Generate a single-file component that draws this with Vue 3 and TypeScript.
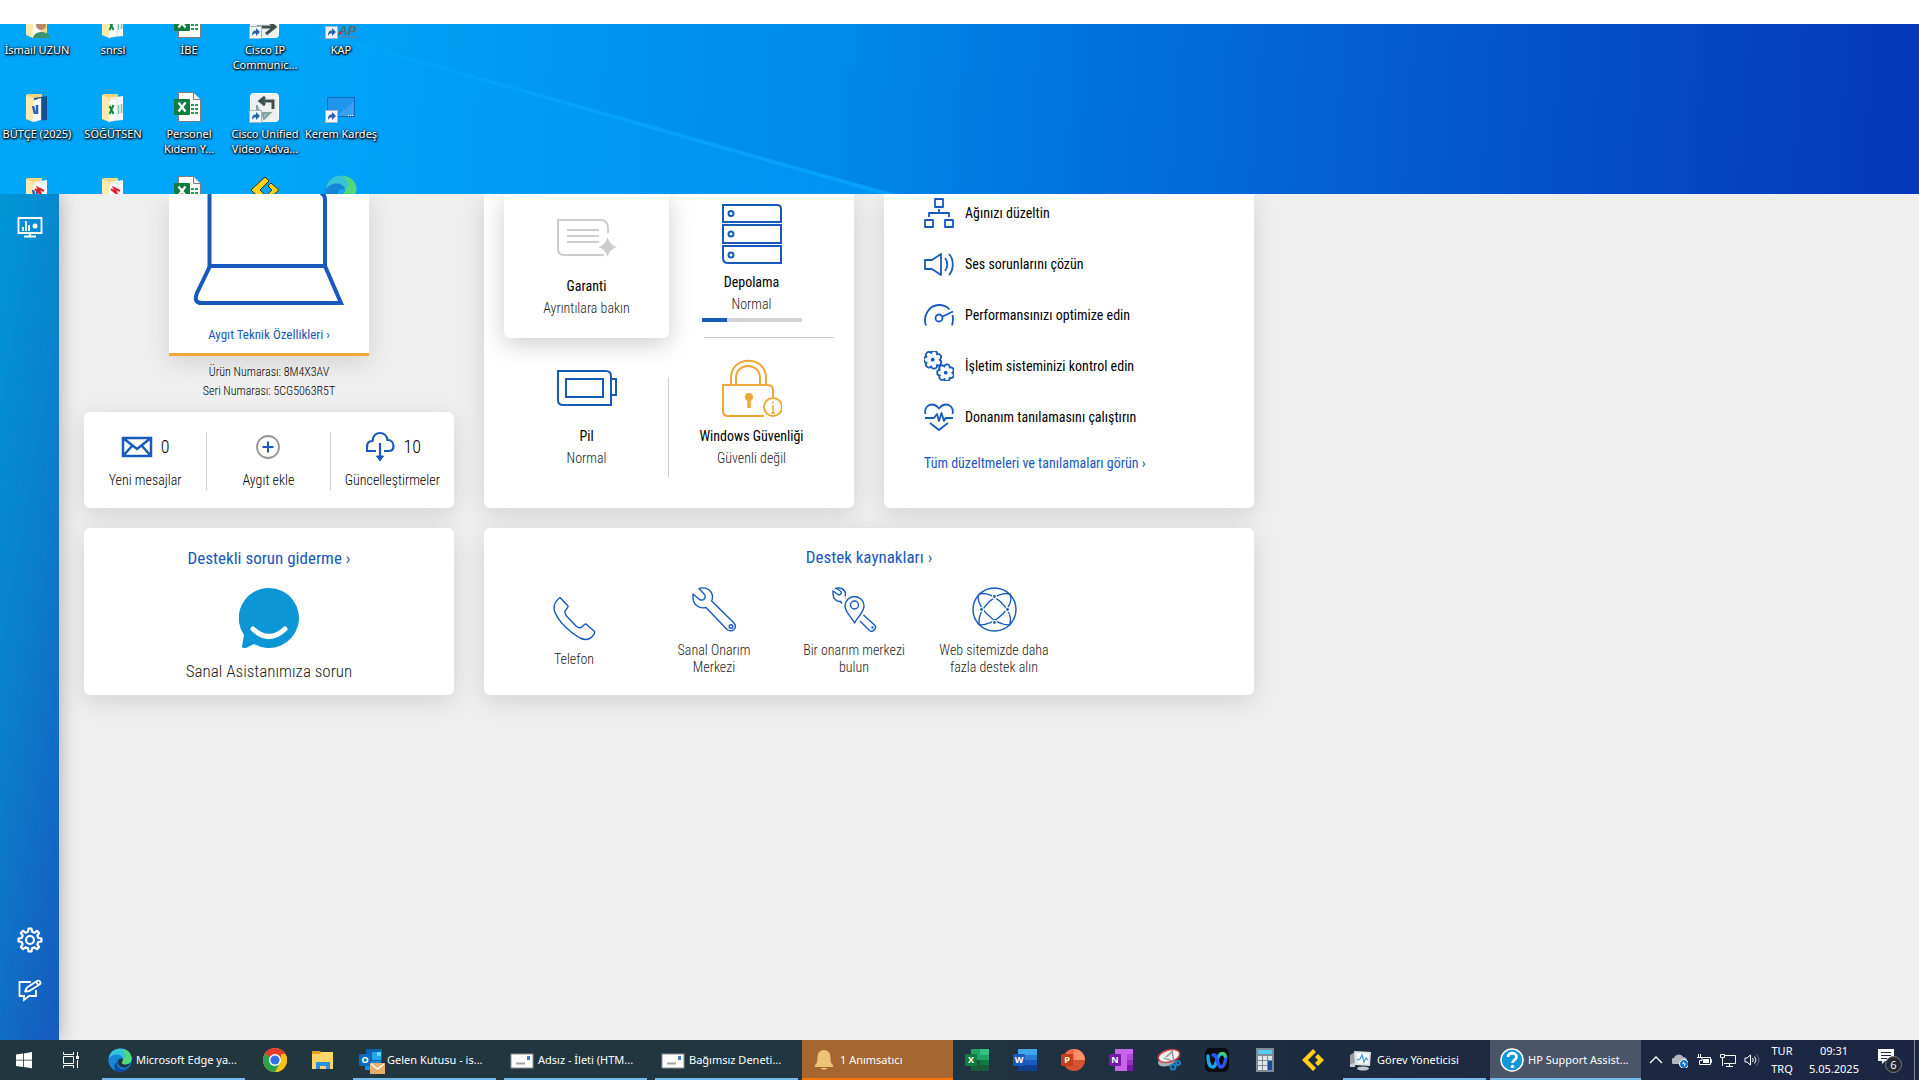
<script setup lang="ts">
interface DesktopItem {
  lines: string[]
  icon: string
}

interface ResourceItem {
  label: string
  icon: string
}

interface TaskItem {
  kind: 'pinned' | 'running' | 'alert' | 'active'
  name: string
  icon: string
}

function gearPath(cx: number, cy: number, outer: number, inner: number, teeth: number): string {
  const points: string[] = []
  const step = (Math.PI * 2) / teeth
  for (let i = 0; i < teeth; i++) {
    const a = i * step - Math.PI / 2
    const corners: [number, number][] = [
      [a - step * 0.3, inner],
      [a - step * 0.17, outer],
      [a + step * 0.17, outer],
      [a + step * 0.3, inner],
    ]
    for (const [angle, r] of corners) {
      points.push(`${(cx + Math.cos(angle) * r).toFixed(2)} ${(cy + Math.sin(angle) * r).toFixed(2)}`)
    }
  }
  return `M${points.join('L')}Z`
}

function flowerPath(cx: number, cy: number, r: number, petals: number): string {
  const step = (Math.PI * 2) / petals
  const at = (i: number): string =>
    `${(cx + Math.cos(i * step) * r).toFixed(2)} ${(cy + Math.sin(i * step) * r).toFixed(2)}`
  let d = `M${at(0)}`
  for (let i = 1; i <= petals; i++) d += `A${(r * 0.42).toFixed(2)} ${(r * 0.42).toFixed(2)} 0 0 1 ${at(i)}`
  return `${d}Z`
}

const shortcut =
  '<rect x=".5" y="19.5" width="12" height="12" fill="#f4f6f8" stroke="#a9b4bd"/><path d="M3 29c0-4 1-5.500 4-5.500V21l4 4-4 4v-2.500c-2 0-3 .5-4 2.500z" fill="#2a62ad"/>'

const folder = (paper: string, mark: string): string =>
  `<path d="M5 4l2-1h14v26H11z" fill="#f3d481"/><path d="M13 7l13-2v24l-11 1z" fill="${paper}"/><path d="M11 10l9-3v22l-8 2z" fill="#fbfcfd" stroke="#c9ced3" stroke-width=".5"/><path d="M5 4l7 3v24l-7-3z" fill="#ffe9ae"/>${mark}`

const sheetMark = '<path d="M12.500 15l4 8M16.500 14l-4 9" stroke="#17834b" stroke-width="2" fill="none"/><path d="M21.500 14v9M24.500 13v9" stroke="#7cc59b" stroke-width="1.500" fill="none"/>'
const wordMark = '<path d="M12 15l2 8M16 14v9" stroke="#2b64c0" stroke-width="2.500" fill="none"/>'
const redMark = '<path d="M14 14l6 5-3-6 6 3" stroke="#e0202c" stroke-width="2" fill="none"/>'

const excelFile =
  '<path d="M5.500 1.500h15l7 7v22h-22z" fill="#fff" stroke="#7d7d7d"/><path d="M20.500 1.500v7h7" fill="#eee" stroke="#7d7d7d"/><path d="M18 13h3v2h-3zM22 13h3v2h-3zM18 17h3v2h-3zM22 17h3v2h-3zM18 21h3v2h-3zM22 21h3v2h-3z" fill="#1f9d5b"/><rect x="1" y="8" width="16" height="16" rx="1" fill="#107c41"/><path d="M5.500 11.500l7 9M12.500 11.500l-7 9" stroke="#fff" stroke-width="2.300"/>'

const ciscoTile = (mark: string): string =>
  `<rect x="1.500" y="2.500" width="28" height="28" rx="3" fill="#eef0f0" stroke="#fff"/>${mark}${shortcut}`

const edge =
  '<circle cx="16" cy="16" r="15.500" fill="#1686d9"/><path d="M1 14C2 5 9 .5 16 .5c9 0 15.500 6.500 15.500 13.500 0 5-4 8-8 8-3 0-5-1-5-2.500s1.500-2 1.500-4.500c0-4-4-6.500-8.500-6.500C6.500 8.500 3 11 1 14z" fill="#36c5d8"/><path d="M19 1c8 1 12.500 7 12.500 13 0 5-4 8-8 8-3 0-5-1-5-2.500s1.500-2 1.500-4.500c3-1 4-9-1-14z" fill="#52d87c"/><path d="M12 18c-1 6 4 11.500 10 10 3-.5 5-2 7-4-3 6-8 8-13 8C8 31 5 24 12 18z" fill="#0b4ea2"/><path d="M13 17c1-3 5-4 7-2 0 2-1.500 3-1.500 4.500S20 22 23 22c2.500 0 5-1 7-2.500C28 25 24 26.500 20 26c-5-.5-8-5-7-9z" fill="#22363f"/>'

const desktopEdge = edge.replace('#22363f', '#18a5ec')

const arrows =
  '<path d="M16 2l4 4-9 9 9 9-4 4L2 15z" fill="#ffd21e" stroke="#3c3000" stroke-width="1"/><path d="M22 8l8 7-8 7-3-3 4-4-4-4z" fill="#ffd21e" stroke="#3c3000" stroke-width="1"/>'

const desktopItems: DesktopItem[] = [
  { lines: ['İsmail UZUN'], icon: folder('#f2d98f', '<path d="M12 31c1-8 16-8 17 0z" fill="#3f9170"/><circle cx="20" cy="18" r="5" fill="#b98a62"/>') },
  { lines: ['snrsl'], icon: folder('#f7f9f8', sheetMark) },
  { lines: ['İBE'], icon: excelFile },
  { lines: ['Cisco IP', 'Communic...'], icon: ciscoTile('<path d="M8 20h17M18 13l8 7-9 7" stroke="#3c5050" stroke-width="3" fill="none"/>') },
  { lines: ['KAP'], icon: `<text x="4" y="28" font-family="Liberation Sans" font-size="13" font-weight="700" font-style="italic" fill="#5e666e">KAP</text><path d="M14 30h18" stroke="#8b7683"/><circle cx="15" cy="26" r="1.500" fill="#d81f2a"/>${shortcut}` },
  { lines: ['BÜTÇE (2025)'], icon: folder('#17508c', wordMark) },
  { lines: ['SÖĞÜTSEN'], icon: folder('#f7f9f8', sheetMark) },
  { lines: ['Personel', 'Kıdem Y...'], icon: excelFile },
  { lines: ['Cisco Unified', 'Video Adva...'], icon: ciscoTile('<path d="M24 18V10H12M16 6l-5 4 5 4" stroke="#3c5050" stroke-width="3" fill="none"/><path d="M8 14v8h5M13 22h8l-6 6z" stroke="#7fa3a0" stroke-width="2" fill="#7fa3a0" fill-opacity=".7"/>') },
  { lines: ['Kerem Kardeş'], icon: `<rect x="2.500" y="6.500" width="27" height="19" fill="#1e96ee" stroke="#0d6ab8"/><path d="M12 25L29 10v15z" fill="#45a9f0" opacity=".6"/><path d="M23 24.500h5" stroke="#fff" stroke-dasharray="1 1"/>${shortcut}` },
  { lines: [], icon: folder('#f7f9f8', wordMark + redMark) },
  { lines: [], icon: folder('#f7f9f8', redMark) },
  { lines: [], icon: excelFile },
  { lines: [], icon: arrows },
  { lines: [], icon: desktopEdge },
]

const fixes: ResourceItem[] = [
  { label: 'Ağınızı düzeltin', icon: '<path d="M11 1h8v8h-8zM1 22h8v7H1zM21 22h8v7h-8zM15 11v4M5 19v-4h20v4"/>' },
  { label: 'Ses sorunlarını çözün', icon: '<path d="M1 11v9h7l9 6V5l-9 6zM21 9c3 3.500 3 9.500 0 13M25 5c5 5.500 5 15.500 0 21"/>' },
  { label: 'Performansınızı optimize edin', icon: '<circle cx="15" cy="18" r="3.500"/><path d="M2 25.500C-1.500 16 5 5 15 5c4 0 8 1.500 10.500 4.500M18.500 16.500L29 11.500M28.500 15c.8 3.500.6 7-.5 10.500"/>' },
  { label: 'İşletim sisteminizi kontrol edin', icon: `<path d="${flowerPath(8.7, 8.7, 6.8, 7)}"/><path d="${flowerPath(21.7, 21.7, 6.4, 7)}"/><circle cx="8.700" cy="8.700" r="1"/><circle cx="21.700" cy="21.700" r="1"/>` },
  { label: 'Donanım tanılamasını çalıştırın', icon: '<path d="M1.500 12C0 6 4 2.500 8 2.500c3 0 5 1.500 7 4 2-2.500 4-4 7-4 4 0 8 3.500 6.500 9.500M1 16h9l3-4 2 7 2.500-8L20 19l1.500-3H29M6 21l9 7 9-7"/>' },
]

const resources: ResourceItem[] = [
  { label: 'Telefon', icon: '<path d="M8 1.500L16 10c1 1-2 3-3 5-.5 2 0 3 1.500 5L24 30c2 1.800 3.500 2 5 1.500 2-1 3.500-4 5-3.500l8 7c1.500 1.500.5 3-1 4.500-3 4-8 5-13 2.500C17 36 6 25 2.500 15 1 9 4 4.500 8 1.500z"/>' },
  { label: 'Sanal Onarım Merkezi', icon: '<path d="M7 1.500c6-2 13 1 13.500 8 0 1.500-.3 3-.8 4.500L42 36c4 5-2 10-7 6.500L14 20.500C7 22 1 18 1 10V7l6.500 5.500c4 2 7-1.500 5-5z"/><circle cx="39" cy="39.500" r="1.800"/>' },
  { label: 'Bir onarım merkezi bulun', icon: '<path d="M3 1.500c5-1.500 10 .5 10.500 5l-.3 3M10 16.500l-1.500-2C5 15 1 12 1 7V4l5 3.500c2 1 4-1 3-3L4.500 1.500M14 11.500l-.5-.5"/><path d="M22.500 36c-3-6-9.500-11-9.500-17a9.500 9.500 0 0 1 19 0c0 6-6.500 11-9.500 17z"/><circle cx="22.500" cy="18" r="4"/><path d="M31.500 28l11 10c3 3-1.500 8-5 5.500L28 34"/><circle cx="40.500" cy="40.500" r=".5"/>' },
  { label: 'Web sitemizde daha fazla destek alın', icon: '<circle cx="22.500" cy="22.500" r="21.500"/><path d="M7 7C2 16 20 38 38 38M7 7c13-4 35 15 31 31M38 7C25 3 5 22 7 38M38 7c5 12-14 31-31 31"/><g fill="#1759bd" stroke="#fff" stroke-width="1.200"><circle cx="22.500" cy="9.500" r="2"/><circle cx="22.500" cy="35.500" r="2"/><circle cx="9.500" cy="22.500" r="2"/><circle cx="35.500" cy="22.500" r="2"/></g>' },
]

const officeText = (letter: string, x: number, y: number): string =>
  `<text x="${x}" y="${y}" text-anchor="middle" font-family="Open Sans" font-size="9" font-weight="700" fill="#fff">${letter}</text>`

const mailIcon =
  '<rect x="1" y="6" width="22" height="14" fill="#fdfdfd" stroke="#8e8e8e"/><rect x="17" y="8" width="3" height="4" fill="#3f7fc4"/><path d="M6 15.500h9" stroke="#a3a3a3" stroke-width="2"/>'

const tasks: TaskItem[] = [
  { kind: 'running', name: 'Microsoft Edge ya...', icon: `<g transform="scale(.75)">${edge}</g>` },
  { kind: 'pinned', name: 'Google Chrome', icon: '<circle cx="12" cy="12" r="12" fill="#fbc116"/><path d="M12 12L1.600 6A12 12 0 0 1 22.400 6z" fill="#e33b2e"/><path d="M12 12L1.600 6A12 12 0 0 0 12 24l5-9z" fill="#2ca24c"/><path d="M12 12h11V6H12z" fill="#e33b2e"/><path d="M22.400 6A12 12 0 0 1 12 24l5.500-9 .5-9z" fill="#fbc116"/><circle cx="12" cy="12" r="6" fill="#fff"/><circle cx="12" cy="12" r="4.600" fill="#2f72e8"/>' },
  { kind: 'pinned', name: 'Dosya Gezgini', icon: '<path d="M1 3h8l2 2h11v4H1z" fill="#e3a111"/><path d="M1 6h8l1-2h12v17H1z" fill="#ffd768"/><path d="M5 14h14v7h-4v-3H9v3H5z" fill="#2f8fdd"/>' },
  { kind: 'running', name: 'Gelen Kutusu - is...', icon: `<path d="M7 1h16v12H7z" fill="#0a63b5"/><path d="M13 4h9v8h-9z" fill="#2aa5e9"/><path d="M18 4h4v4h-4z" fill="#5fd5fb"/><path d="M6 13h16v9H6z" fill="#1490df"/><rect x="0" y="6" width="12" height="12" rx="1" fill="#0f6cbd"/>${officeText('O', 6, 15)}<rect x="11" y="15" width="15" height="11" fill="#e6ad6b"/><path d="M12 16l6.500 5 6.500-5" fill="none" stroke="#fff" stroke-width="1.500"/>` },
  { kind: 'running', name: 'Adsız - İleti (HTM...', icon: mailIcon },
  { kind: 'running', name: 'Bağımsız Deneti...', icon: mailIcon },
  { kind: 'alert', name: '1 Anımsatıcı', icon: '<path d="M12 2c5 0 6.500 4 6.500 8 0 4 1 6 2.500 7v2H3v-2c1.500-1 2.500-3 2.500-7 0-4 1.500-8 6.500-8zM9 20h6c0 2-6 2-6 0z" fill="#ecc377"/>' },
  { kind: 'pinned', name: 'Excel', icon: `<path d="M6 1h9v11H6z" fill="#21a366"/><path d="M15 1h9v6h-9z" fill="#33c481"/><path d="M15 7h9v5h-9z" fill="#21a366"/><path d="M6 12h9v11H6z" fill="#185c37"/><path d="M15 12h9v5h-9z" fill="#107c41"/><path d="M15 17h9v6h-9z" fill="#185c37"/><rect y="6" width="12" height="12" rx="1" fill="#107c41"/>${officeText('X', 6, 15)}` },
  { kind: 'pinned', name: 'Word', icon: `<path d="M5 1h19v6H5z" fill="#41a5ee"/><path d="M5 7h19v5H5z" fill="#2b7cd3"/><path d="M5 12h19v5H5z" fill="#185abd"/><path d="M5 17h19v6H5z" fill="#103f91"/><rect y="6" width="12" height="12" rx="1" fill="#185abd"/>${officeText('W', 6, 15)}` },
  { kind: 'pinned', name: 'PowerPoint', icon: `<circle cx="13" cy="12" r="11" fill="#d35230"/><path d="M13 1a11 11 0 0 1 11 11H13z" fill="#ff8f6b"/><path d="M13 1a11 11 0 0 0-11 11h11z" fill="#ed6c47"/><rect y="6" width="12" height="12" rx="1" fill="#c43e1c"/>${officeText('P', 6, 15)}` },
  { kind: 'pinned', name: 'OneNote', icon: `<path d="M6 1h18v22H6z" fill="#ca64ea"/><path d="M18 6h6v6h-6z" fill="#ae4bd5"/><path d="M18 12h6v5h-6z" fill="#9332bf"/><path d="M18 17h6v6h-6z" fill="#7719aa"/><rect y="6" width="12" height="12" rx="1" fill="#7719aa"/>${officeText('N', 6, 15)}` },
  { kind: 'pinned', name: 'Ekran Alıntısı Aracı', icon: '<path d="M1 15c1 5 10 4 15 1l6-9-20 4z" fill="#a8b1b7"/><ellipse cx="12" cy="8" rx="11" ry="6" fill="#f3f0f0" stroke="#cc4148" stroke-width="1.500" transform="rotate(-15 12 8)"/><path d="M15 2l2 13M7 10l11 4M15 4l-6 5" stroke="#7e8990" stroke-width="1.200" fill="none"/><circle cx="16" cy="19" r="2.500" fill="none" stroke="#1a84c6" stroke-width="2"/><circle cx="21" cy="15" r="2" fill="none" stroke="#1a84c6" stroke-width="2"/>' },
  { kind: 'pinned', name: 'Webex', icon: '<rect width="24" height="24" rx="5" fill="#0a0c0f"/><path d="M3 8c0 9 3 11 5 11s3-4 4-7 2-6 4-6" stroke="#14a7ee" stroke-width="3.500" fill="none" stroke-linecap="round"/><path d="M8 7c2-1 3 2 4 5s2 7 4 7 4-3 5-10" stroke="#2b55f5" stroke-width="3.500" fill="none" stroke-linecap="round"/><path d="M16 6c2-1 4 0 4 2" stroke="#3bd07a" stroke-width="3.500" fill="none" stroke-linecap="round"/>' },
  { kind: 'pinned', name: 'Hesap Makinesi', icon: '<rect x="3" width="18" height="24" fill="#7f8b95"/><rect x="5" y="2" width="14" height="4" fill="#55cdf2"/><path d="M5 8h4v4H5zM10 8h4v4h-4zM15 8h4v4h-4zM5 13h4v4H5zM10 13h4v4h-4zM5 18h4v4H5zM10 18h4v4h-4z" fill="#e2e6e9"/><path d="M15 13h4v9h-4z" fill="#114f94"/>' },
  { kind: 'pinned', name: 'Logo', icon: '<path d="M12 1l3 3-8 8 8 8-3 3L1 12z" fill="#ffcf17"/><path d="M17 6l6 6-6 6-3-3 3-3-3-3z" fill="#ffcf17"/>' },
  { kind: 'running', name: 'Görev Yöneticisi', icon: '<path d="M1 7l5-3v12l-5 2z" fill="#969ea3"/><path d="M5 3l17 1-1 14-15-1z" fill="#dfe5e7"/><path d="M8 5l12 1-1 10-10-1z" fill="#f8fcff"/><path d="M8 12l3-1 2-4 2 7 2-4 2 2" stroke="#3d94cf" fill="none" stroke-width="1.200"/><ellipse cx="14" cy="20.500" rx="6" ry="2" fill="#bfc8cc"/><path d="M1 16l5-1v4H1z" fill="#c7cdd0"/>' },
  { kind: 'active', name: 'HP Support Assist...', icon: '<circle cx="12" cy="12" r="11" fill="#0d96d8" stroke="#fff" stroke-width="1.500"/><path d="M8 9c0-5 8.500-5 8.500 0 0 3-4 3-4 6" stroke="#fff" stroke-width="2.800" fill="none"/><circle cx="12.500" cy="18.500" r="1.700" fill="#fff"/>' },
]

const settingsGear = gearPath(13, 13, 11.5, 8.6, 8)
</script>

<template>
  <div class="screen">
    <section class="desktop">
      <svg class="beam" viewBox="0 0 1919 170" preserveAspectRatio="none" aria-hidden="true">
        <defs>
          <linearGradient id="beam-fade" x1="0" x2="1">
            <stop offset="0" stop-color="#00b0ff" stop-opacity="0" />
            <stop offset=".5" stop-color="#08aaff" stop-opacity=".6" />
            <stop offset="1" stop-color="#08a4ff" stop-opacity=".8" />
          </linearGradient>
          <linearGradient id="beam-under" x1="0" x2="1">
            <stop offset="0" stop-color="#00a8fa" stop-opacity="0" />
            <stop offset="1" stop-color="#00a0ff" stop-opacity=".5" />
          </linearGradient>
        </defs>
        <path d="M250 -10L890 170H250z" fill="url(#beam-under)" />
        <path d="M250 -12L895 170H880L250 -9z" fill="url(#beam-fade)" />
      </svg>
      <ul class="desktop-grid">
        <li v-for="(item, i) in desktopItems" :key="i" class="desktop-item">
          <svg width="32" height="32" viewBox="0 0 32 32" aria-hidden="true" v-html="item.icon"></svg>
          <span v-for="line in item.lines" :key="line" class="desktop-label">{{ line }}</span>
        </li>
      </ul>
    </section>

    <div class="app">
      <nav class="sidebar">
        <button type="button" aria-label="Panom">
          <svg width="26" height="26" viewBox="0 0 26 26" fill="none" stroke="#fff" stroke-width="1.800">
            <path d="M1.500 4h23v15h-23zM13 19v3M7 22.500h12" />
            <path d="M6 17v-4M9 17V7M12 17v-6" />
            <circle cx="18" cy="12" r="2.500" fill="#fff" stroke="none" />
          </svg>
        </button>
        <span class="spacer"></span>
        <button type="button" aria-label="Ayarlar">
          <svg width="26" height="26" viewBox="0 0 26 26" fill="none" stroke="#fff" stroke-width="2.200" stroke-linejoin="round">
            <path :d="settingsGear" />
            <circle cx="13" cy="13" r="4" />
          </svg>
        </button>
        <button type="button" aria-label="Geri bildirim">
          <svg width="26" height="26" viewBox="0 0 26 26" fill="none" stroke="#fff" stroke-width="1.800">
            <path d="M14 5H2.500v14H7v4l5-4h7v-6" />
            <path d="M8 14.500l2-4L20 4c3-1.500 4.500 2 2.500 3.500L12.500 14z" stroke-linejoin="round" />
            <path d="M19 5l2.500 3" />
          </svg>
        </button>
      </nav>

      <main class="content">
        <div class="device-column">
          <section class="device">
            <svg viewBox="0 0 200 120" width="200" height="120" fill="none" stroke="#1759bd" stroke-width="4" aria-hidden="true">
              <path d="M40.500 0V72H156V5q0-4-4-6" />
              <path d="M41 72L28 99q-4 10 5 10H172L156 72" />
            </svg>
            <a href="#specs">Aygıt Teknik Özellikleri ›</a>
          </section>
          <p class="serials">Ürün Numarası: 8M4X3AV<br />Seri Numarası: 5CG5063R5T</p>
          <section class="card status">
            <button type="button">
              <span class="status-top">
                <svg width="32" height="32" viewBox="0 0 32 32" fill="none" stroke="#1759bd" stroke-width="2.500">
                  <path d="M2 7h28v18H2zM2 7l14 11L30 7M2 25l9-10M30 25l-9-10" />
                </svg>
                <span class="count">0</span>
              </span>
              <span>Yeni mesajlar</span>
            </button>
            <button type="button">
              <span class="status-top">
                <svg width="32" height="32" viewBox="0 0 32 32" fill="none">
                  <circle cx="16" cy="16" r="11" stroke="#979797" stroke-width="1.800" />
                  <path d="M16 10.500v11M10.500 16h11" stroke="#1759bd" stroke-width="2" />
                </svg>
              </span>
              <span>Aygıt ekle</span>
            </button>
            <button type="button">
              <span class="status-top">
                <svg width="32" height="32" viewBox="0 0 32 32" fill="none" stroke="#1759bd" stroke-width="2.200">
                  <path d="M12 20H3v-4c0-4 2-6 5.500-6C9 5 12 2 16 2s7 3 7.500 7c4 0 6 3 6 6s-2 5-5 5h-4.500M16 12v14" />
                  <path d="M12.500 25h7L16 30z" fill="#1759bd" stroke-width="1" />
                </svg>
                <span class="count">10</span>
              </span>
              <span>Güncelleştirmeler</span>
            </button>
          </section>
        </div>

        <section class="card top health">
          <button type="button" class="tile raised">
            <svg width="60" height="60" viewBox="0 0 60 60" fill="none" stroke="#ccc" stroke-width="2">
              <path d="M51 26v-4q0-9-7-9H1v29q0 6 6 6h40" transform="translate(0 -1)" />
              <path d="M10 22h32M10 28h32M10 34h32" />
              <path d="M50.500 29q2 8 9.500 10-7.500 2-9.500 10-2-8-9.500-10 7.500-2 9.500-10z" fill="#ccc" stroke="none" />
            </svg>
            <strong>Garanti</strong>
            <span>Ayrıntılara bakın</span>
          </button>
          <button type="button" class="tile storage">
            <svg width="60" height="60" viewBox="0 0 60 60" fill="none" stroke="#1759bd" stroke-width="2">
              <path d="M1 1h54q4 0 4 4v13H1zM1 21h58v18H1zM1 42h58v17H6q-5 0-5-5z" />
              <circle cx="9" cy="9.500" r="2.500" /><circle cx="9" cy="30" r="2.500" /><circle cx="9" cy="51" r="2.500" />
            </svg>
            <strong>Depolama</strong>
            <span>Normal</span>
            <progress value="25" max="100" aria-label="Depolama kullanımı"></progress>
          </button>
          <button type="button" class="tile battery">
            <svg width="60" height="60" viewBox="0 0 60 60" fill="none" stroke="#1759bd" stroke-width="2">
              <path d="M1 13h48q5 0 5 5v29H6q-5 0-5-5zM9 21h37v18H9zM54 21h5v16h-5" />
            </svg>
            <strong>Pil</strong>
            <span>Normal</span>
          </button>
          <button type="button" class="tile security">
            <svg width="60" height="60" viewBox="0 0 60 60" fill="none" stroke="#f0a638" stroke-width="2">
              <path d="M42 58H6q-5 0-5-5V27h45q5 0 5 5v7M9 27V20C9-3 44-3 44 20v7M14 27V20C14 4 38 4 38 20v7" />
              <circle cx="51" cy="49" r="9" />
              <path d="M50 48h1v7M49 55h4" stroke-width="1.500" />
              <circle cx="51" cy="44.500" r="1" fill="#f0a638" stroke="none" />
              <circle cx="27" cy="39" r="4" fill="#f0a638" stroke="none" />
              <path d="M27 39v11" stroke-width="3.500" />
            </svg>
            <strong>Windows Güvenliği</strong>
            <span>Güvenli değil</span>
          </button>
        </section>

        <section class="card top fixes">
          <a v-for="fix in fixes" :key="fix.label" href="#fix" class="fix">
            <svg width="30" height="30" viewBox="0 0 30 30" fill="none" stroke="#1759bd" stroke-width="1.800" stroke-linejoin="round" v-html="fix.icon"></svg>
            <span>{{ fix.label }}</span>
          </a>
          <a href="#all" class="all-fixes">Tüm düzeltmeleri ve tanılamaları görün ›</a>
        </section>

        <section class="card assistant">
          <a href="#assistant" class="heading">Destekli sorun giderme ›</a>
          <svg width="60" height="60" viewBox="0 0 60 60" aria-hidden="true">
            <path d="M30 0a30 30 0 1 1-15 56l-8 4c-2 1-4 0-4-2l2-11A30 30 0 0 1 30 0z" fill="#0d96d5" />
            <path d="M14 41q16 15 32 0" fill="none" stroke="#fff" stroke-width="5" stroke-linecap="round" />
          </svg>
          <span class="assistant-text">Sanal Asistanımıza sorun</span>
        </section>

        <section class="card support">
          <a href="#resources" class="heading">Destek kaynakları ›</a>
          <div class="resources">
            <a v-for="item in resources" :key="item.label" href="#resource" class="resource">
              <svg width="45" height="45" viewBox="0 0 45 45" fill="none" stroke="#1759bd" stroke-width="1.400" stroke-linejoin="round" v-html="item.icon"></svg>
              <span>{{ item.label }}</span>
            </a>
          </div>
        </section>
      </main>
    </div>

    <footer class="taskbar">
      <button type="button" class="task system" aria-label="Başlat">
        <svg width="18" height="18" viewBox="0 0 18 18" fill="#fff">
          <path d="M1 3.500l7-1v6.300H1zM8.800 2.400L17 1v7.800H8.800zM1 9.600h7V16l-7-1zM8.800 9.600H17v7.700l-8.200-1.200z" />
        </svg>
      </button>
      <button type="button" class="task system" aria-label="Görev Görünümü">
        <svg width="18" height="18" viewBox="0 0 18 18" fill="none" stroke="#fff">
          <path d="M1.500 1v2.500h10V1M1.500 17v-2.500h10V17M1.500 5.500h10v7h-10zM15.500 1v4M15.500 9v8" />
          <path d="M14 5h3v3h-3z" fill="#fff" stroke="none" />
        </svg>
      </button>
      <button v-for="task in tasks" :key="task.name" type="button" class="task" :class="task.kind" :aria-label="task.name">
        <svg width="24" height="24" viewBox="0 0 24 24" overflow="visible" v-html="task.icon"></svg>
        <span v-if="task.kind !== 'pinned'">{{ task.name }}</span>
      </button>
      <span class="spacer"></span>
      <div class="tray">
        <svg width="16" height="16" viewBox="0 0 16 16" fill="none" stroke="#fff" stroke-width="1.300"><path d="M2 11l6-6 6 6" /></svg>
        <svg width="16" height="16" viewBox="0 0 16 16">
          <path d="M2 12a3 3 0 0 1 0-6c1-4 7-5 9-1 3 0 4 2 4 4l-3 3z" fill="#b3b7bd" />
          <circle cx="12" cy="12" r="4.500" fill="#1a6fd0" stroke="#fff" /><path d="M10 11.500l2-2v2h2l-2 3v-2.500z" fill="#fff" />
        </svg>
        <svg width="16" height="16" viewBox="0 0 16 16" fill="none" stroke="#fff">
          <path d="M5 5.500h9.500v7H5M14.500 7.500h1v3h-1M2.500 2v3M4.500 2v3M1 5.500h5v3H3.500v4H6" /><path d="M7 7h6v4H7z" fill="#fff" stroke="none" />
        </svg>
        <svg width="16" height="16" viewBox="0 0 16 16" fill="none" stroke="#fff">
          <path d="M5 3.500h10.500v8H4M9.500 11.500v3M6 14.500h7M.5 2.500h4v3h-4zM2.500 5.500V14" />
        </svg>
        <svg width="16" height="16" viewBox="0 0 16 16" fill="none" stroke="#fff">
          <path d="M1 6v4h2l3.500 3V3L3 6zM8.500 6q1.500 2 0 4" /><path d="M10.500 4.500q3 3.500 0 7" /><path d="M12.500 2.500q5 5.500 0 11" stroke="#66748a" />
        </svg>
      </div>
      <div class="stack language"><span>TUR</span><span>TRQ</span></div>
      <div class="stack clock"><span>09:31</span><span>5.05.2025</span></div>
      <button type="button" class="notifications" aria-label="Bildirimler">
        <svg width="28" height="28" viewBox="0 0 28 28">
          <path d="M2 3h16v12h-9l-3 3v-3H2z" fill="#fff" /><path d="M5 6.500h10M5 9.500h10M5 12.500h6" stroke="#1b2741" />
          <circle cx="17.500" cy="18.500" r="8" fill="#25292f" stroke="#777d86" />
          <text x="17.500" y="22.500" text-anchor="middle" font-family="Open Sans" font-size="11" fill="#fff">6</text>
        </svg>
      </button>
    </footer>
  </div>
</template>

<style>
body {
  background: #fff;
}
</style>

<style scoped>
.screen {
  box-sizing: border-box;
  display: flex;
  flex-direction: column;
  min-height: 100vh;
  padding-top: 24px;
  font-family: "Roboto Condensed", "Roboto", sans-serif;
  font-size: 14px;
  line-height: 20px;
  color: #000;
}

button {
  padding: 0;
  border: 0;
  background: none;
  font: inherit;
  color: inherit;
}

a {
  color: #1759bd;
  text-decoration: none;
}

svg {
  display: block;
  flex: none;
}

.spacer {
  flex: 1;
}

.desktop {
  position: relative;
  height: 170px;
  overflow: hidden;
  background: linear-gradient(94deg, #00a6fa 0%, #00a6fa 15%, #0098f2 28%, #0088ea 44%, #0070dc 58%, #0460d2 70%, #044cc6 84%, #0438b8 100%);
}

.beam {
  position: absolute;
  inset: 0;
  width: 100%;
  height: 100%;
}

.desktop-grid {
  position: relative;
  display: grid;
  grid-template-columns: repeat(5, 76px);
  grid-auto-rows: 84px;
  margin: -17px 0 0 -1px;
  padding: 0;
  list-style: none;
}

.desktop-item {
  display: flex;
  flex-direction: column;
  align-items: center;
}

.desktop-item svg {
  margin-bottom: 3px;
}

.desktop-label {
  font: 11px/15px "Noto Sans", "Open Sans", sans-serif;
  white-space: nowrap;
  color: #fff;
  text-shadow: 1px 1px 2px #000, 0 1px 2px #000, 0 0 3px #000;
}

.app {
  display: flex;
  flex: 1;
  overflow: hidden;
  background: #efefef;
}

.sidebar {
  box-sizing: border-box;
  display: flex;
  flex-direction: column;
  align-items: center;
  gap: 24px;
  width: 59px;
  padding: 20px 0 37px;
  background: linear-gradient(100deg, #0096d6 0%, #0a80cd 45%, #1759bd 100%);
  box-shadow: 0 0 20px rgba(0, 0, 0, 0.3);
}

.content {
  display: grid;
  flex: 1;
  grid-template-columns: repeat(3, 370px);
  grid-template-rows: 314px 167px;
  gap: 20px 30px;
  padding: 0 25px;
}

.card {
  border-radius: 6px;
  background: #fff;
  box-shadow: 0 6px 24px rgba(0, 0, 0, 0.12);
}

.card.top {
  border-radius: 0 0 6px 6px;
}

.device-column {
  display: flex;
  flex-direction: column;
  align-items: center;
}

.device {
  display: flex;
  flex-direction: column;
  align-items: center;
  gap: 11px;
  padding-bottom: 8px;
  border-bottom: 3px solid #f0a638;
  background: #fff;
  box-shadow: 0 6px 24px rgba(0, 0, 0, 0.12);
  font-size: 13px;
}

.serials {
  flex: 1;
  margin: 7px 0 0;
  font-size: 12px;
  font-weight: 300;
  line-height: 19px;
  text-align: center;
  color: #000;
}

.status {
  box-sizing: border-box;
  display: grid;
  grid-template-columns: repeat(3, 1fr);
  width: 100%;
  height: 96px;
  padding: 20px 0;
  font-weight: 300;
}

.status button {
  display: flex;
  flex-direction: column;
  align-items: center;
  gap: 8px;
}

.status button:not(:last-child) {
  border-right: 1px solid #ccc;
}

.status-top {
  display: flex;
  align-items: center;
  gap: 8px;
  height: 30px;
}

.count {
  font-size: 18px;
}

.health {
  display: grid;
  grid-template-columns: 165px 165px;
  grid-template-rows: 144px 150px;
  padding: 0 20px 20px;
}

.tile {
  box-sizing: border-box;
  position: relative;
  display: flex;
  flex-direction: column;
  align-items: center;
  justify-content: flex-end;
  gap: 2px;
  padding-bottom: 20px;
}

.tile strong {
  margin-top: 6px;
  font-weight: 400;
}

.tile span {
  font-weight: 300;
  color: #222;
}

.raised {
  border-radius: 0 0 6px 6px;
  background: #fff;
  box-shadow: 0 6px 24px rgba(0, 0, 0, 0.2);
}

.storage {
  padding-bottom: 16px;
}

.battery,
.security {
  justify-content: flex-start;
  padding: 20px 0 0;
}

.storage::after {
  position: absolute;
  right: 0;
  bottom: 0;
  width: 130px;
  height: 1px;
  background: #ccc;
  content: "";
}

.battery::after {
  position: absolute;
  top: 39px;
  right: 0;
  width: 1px;
  height: 100px;
  background: #ccc;
  content: "";
}

progress {
  display: block;
  width: 100px;
  height: 4px;
  margin-top: 2px;
  border: 0;
  appearance: none;
}

progress::-webkit-progress-bar {
  background: #d4d4d4;
}

progress::-webkit-progress-value {
  background: #1759bd;
}

.fixes {
  display: flex;
  flex-direction: column;
  align-items: flex-start;
  gap: 21px;
  padding: 4px 40px 0;
}

.fix {
  display: flex;
  align-items: center;
  gap: 11px;
  color: #000;
}

.assistant,
.support {
  display: flex;
  flex-direction: column;
  align-items: center;
  gap: 20px;
}

.assistant {
  padding-top: 20px;
}

.assistant svg {
  margin-bottom: -7px;
}

.heading,
.assistant-text {
  font-size: 17px;
}

.assistant-text {
  font-weight: 300;
  color: #222;
}

.support {
  grid-column: span 2;
  box-sizing: border-box;
  padding: 19px 20px 0;
}

.resources {
  display: flex;
  align-items: center;
  align-self: stretch;
}

.resource {
  display: flex;
  flex-direction: column;
  align-items: center;
  gap: 10px;
  width: 140px;
  font-weight: 300;
  line-height: 17px;
  text-align: center;
  color: #222;
}

.resource span {
  width: 114px;
}

.taskbar {
  display: flex;
  align-items: stretch;
  height: 40px;
  background: linear-gradient(90deg, #22363f 0%, #213640 45%, #1d2b40 68%, #1b2643 100%);
  font: 11px/18px "Noto Sans", "Open Sans", sans-serif;
  color: #fff;
}

.task {
  position: relative;
  display: flex;
  align-items: center;
  gap: 4px;
  box-sizing: border-box;
  width: 151px;
  padding-left: 10px;
  white-space: nowrap;
}

.task.pinned,
.task.system {
  justify-content: center;
  width: 48px;
  padding: 0;
}

.task.system {
  width: 47px;
}

.task.running + .task.pinned,
.task.pinned + .task.running {
  margin-left: 2px;
}

.task.system + .task.running {
  margin-left: 4px;
}

.task.alert {
  background: #a56632;
}

.task.active {
  background: #4a5568;
}

.task:not(.pinned, .system)::after {
  position: absolute;
  right: 4px;
  bottom: 0;
  left: 4px;
  height: 2px;
  background: #76b9ed;
  content: "";
}

.task.alert::after,
.task.active::after {
  right: 0;
  left: 0;
}

.task.alert::after {
  background: #ff7300;
}

.tray {
  display: flex;
  align-items: center;
  gap: 8px;
}

.stack {
  display: flex;
  flex-direction: column;
  justify-content: center;
  text-align: center;
}

.language {
  width: 44px;
}

.clock {
  width: 60px;
}

.notifications {
  display: flex;
  align-items: center;
  margin-right: 4px;
  margin-left: 12px;
  padding-right: 10px;
  border-right: 1px solid #7a8496;
}
</style>
